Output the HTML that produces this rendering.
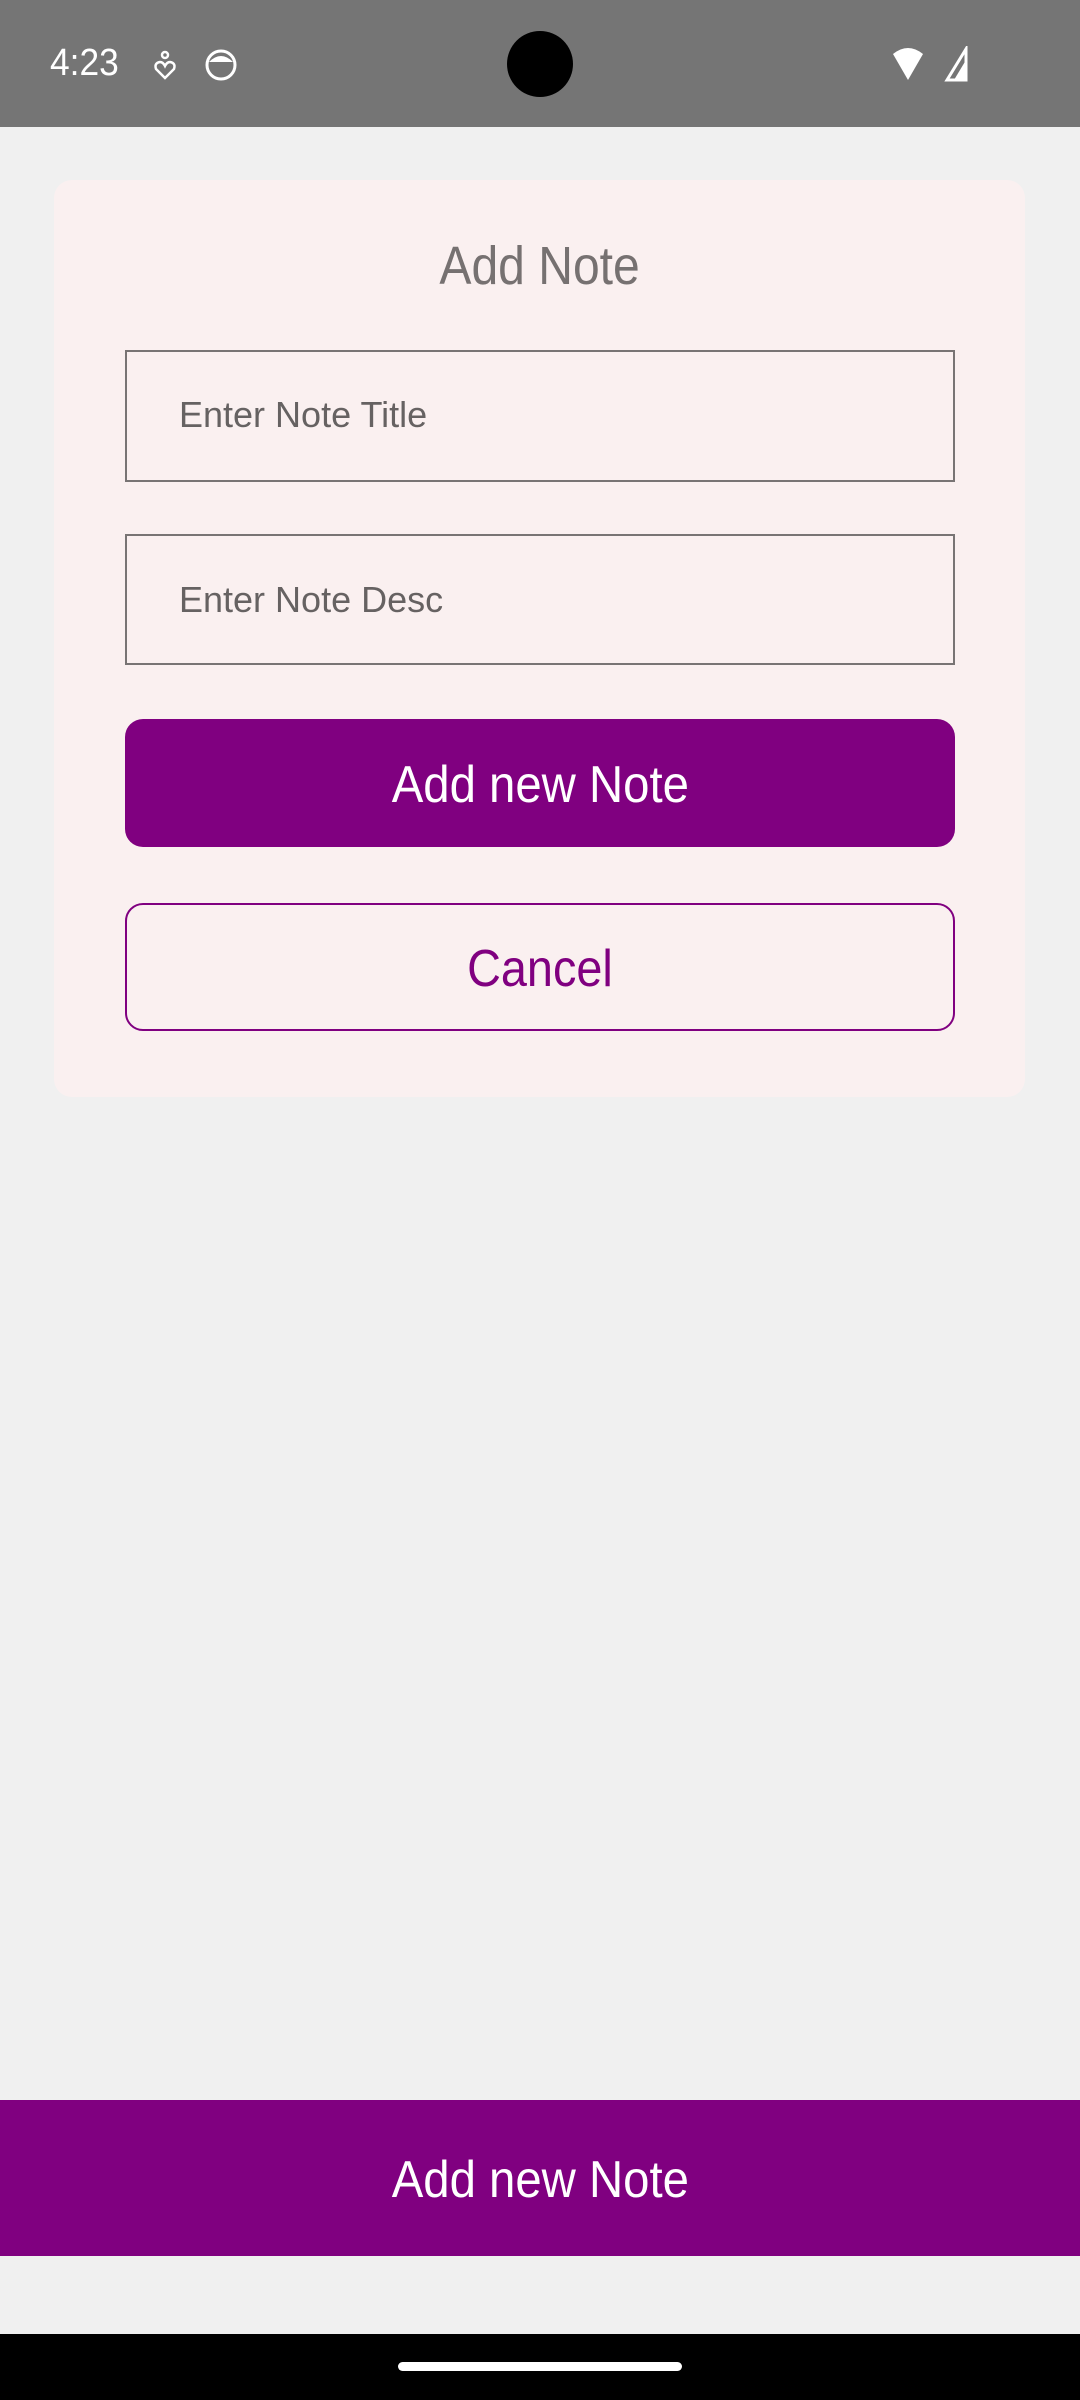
<!DOCTYPE html>
<html><head><meta charset="utf-8"><style>
*{margin:0;padding:0;box-sizing:border-box}
body{width:1080px;height:2400px;background:#f0f0f0;font-family:"Liberation Sans",sans-serif;position:relative;overflow:hidden}
.abs{position:absolute}
.t{display:inline-block;white-space:nowrap}
.c{position:absolute;left:0;right:0;text-align:center}
</style></head><body>
<div class="abs" style="left:0;top:0;width:1080px;height:127px;background:#757575"></div>
<div class="abs" style="left:50px;top:43px;color:#fff;font-size:38px;line-height:40px"><span class="t" style="transform:scaleX(.93);transform-origin:left">4:23</span></div>
<svg class="abs" style="left:150px;top:50px" width="30" height="30" viewBox="0 0 30 30"><circle cx="15" cy="5" r="3" fill="none" stroke="#fff" stroke-width="2.5"/><path d="M15 28 L6 19 Q4 13 10 12 Q13 12 15 16 Q17 12 20 12 Q26 13 24 19 Z" fill="none" stroke="#fff" stroke-width="2.5"/></svg>
<svg class="abs" style="left:204px;top:48px" width="34" height="34" viewBox="0 0 34 34"><circle cx="17" cy="17" r="14" fill="none" stroke="#fff" stroke-width="3"/><path d="M5 14 Q17 2 29 14 Z" fill="#fff"/></svg>
<div class="abs" style="left:507px;top:31px;width:66px;height:66px;border-radius:50%;background:#000"></div>
<svg class="abs" style="left:890px;top:46px" width="80" height="36" viewBox="0 0 80 36"><path d="M3 8 Q18 -4 33 8 L18 34 Z" fill="#fff"/><path d="M57 34 L76 3 L76 34 Z" fill="none" stroke="#fff" stroke-width="3"/><path d="M64 34 L76 14 L76 34Z" fill="#fff"/></svg>

<div class="abs" style="left:54px;top:180px;width:971px;height:917px;background:#faf0f0;border-radius:18px"></div>
<div class="c" style="top:237px;font-size:54px;line-height:58px;color:#767171"><span class="t" style="transform:scaleX(.89)">Add Note</span></div>

<div class="abs" style="left:125px;top:350px;width:830px;height:132px;border:2px solid #787474"></div>
<div class="abs" style="left:179px;top:395px;font-size:36px;line-height:40px;color:#666262"><span class="t">Enter Note Title</span></div>
<div class="abs" style="left:125px;top:534px;width:830px;height:131px;border:2px solid #787474"></div>
<div class="abs" style="left:179px;top:580px;font-size:36px;line-height:40px;color:#666262"><span class="t">Enter Note Desc</span></div>

<div class="abs" style="left:125px;top:719px;width:830px;height:128px;background:#800080;border-radius:18px"></div>
<div class="c" style="top:757px;font-size:52px;line-height:56px;color:#fff"><span class="t" style="transform:scaleX(.91)">Add new Note</span></div>
<div class="abs" style="left:125px;top:903px;width:830px;height:128px;border:2px solid #800080;border-radius:18px"></div>
<div class="c" style="top:941px;font-size:52px;line-height:56px;color:#800080"><span class="t" style="transform:scaleX(.9)">Cancel</span></div>

<div class="abs" style="left:0;top:2100px;width:1080px;height:156px;background:#800080"></div>
<div class="c" style="top:2152px;font-size:52px;line-height:56px;color:#fff"><span class="t" style="transform:scaleX(.91)">Add new Note</span></div>

<div class="abs" style="left:0;top:2334px;width:1080px;height:66px;background:#000"></div>
<div class="abs" style="left:398px;top:2362px;width:284px;height:9px;border-radius:5px;background:#fff"></div>
</body></html>
